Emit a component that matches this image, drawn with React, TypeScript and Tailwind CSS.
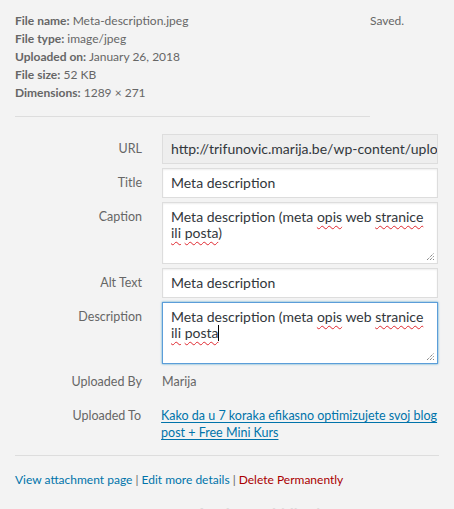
const details = [
  { label: "File name:", value: "Meta-description.jpeg" },
  { label: "File type:", value: "image/jpeg" },
  { label: "Uploaded on:", value: "January 26, 2018" },
  { label: "File size:", value: "52 KB" },
  { label: "Dimensions:", value: "1289 × 271" },
];

const squiggle =
  "underline decoration-wavy decoration-[#e0282f] decoration-1 underline-offset-[3px]";

function ResizeHandle() {
  return (
    <svg
      className="absolute right-[2px] bottom-[2px]"
      width="9"
      height="9"
      viewBox="0 0 9 9"
    >
      <path d="M1 8 L8 1 M4 8 L8 4 M7 8 L8 7" stroke="#555" strokeWidth="1" strokeDasharray="1 1" />
    </svg>
  );
}

function Row({ label, children }: { label: string; children: React.ReactNode }) {
  return (
    <div className="flex mb-[4px]">
      <div className="w-[127px] shrink-0 text-right text-[12.5px] text-[#666] pt-[6px] leading-[18px]">
        {label}
      </div>
      <div className="ml-[20px] w-[276px]">{children}</div>
    </div>
  );
}

function Caption({ focused, caret }: { focused?: boolean; caret?: boolean }) {
  return (
    <div
      className={
        "relative h-[62px] bg-white px-[8px] pt-[6px] text-[14px] leading-[16px] text-[#32373c] border " +
        (focused
          ? "border-[#5b9dd9] shadow-[0_0_2px_rgba(30,140,190,0.8)]"
          : "border-[#ddd] shadow-[inset_0_1px_2px_rgba(0,0,0,0.07)]")
      }
    >
      Meta description (meta <span className={squiggle}>opis</span> web{" "}
      <span className={squiggle}>stranice</span> <span className={squiggle}>ili</span>{" "}
      <span className={squiggle}>posta</span>
      {caret ? <span className="inline-block w-px h-[16px] bg-black align-[-3px]" /> : ")"}
      <ResizeHandle />
    </div>
  );
}

export default function App() {
  return (
    <div
      className="w-[454px] h-[509px] overflow-hidden bg-[#f3f3f3] text-[#666]"
      style={{ fontFamily: 'Lato, "Open Sans", sans-serif' }}
    >
      <div className="px-[15px] pt-[12px]">
        <div className="flex">
          <div className="w-[355px] text-[12px] leading-[18px]">
            {details.map((d) => (
              <div key={d.label}>
                <span className="font-bold">{d.label}</span> {d.value}
              </div>
            ))}
          </div>
          <div className="text-[12px] leading-[18px]">Saved.</div>
        </div>
        <div className="mt-[14px] w-[355px] border-t border-[#ddd]" />

        <div className="mt-[17px]">
          <Row label="URL">
            <div className="h-[30px] bg-[#eee] border border-[#ddd] px-[8px] text-[14px] leading-[28px] text-[#32373c] overflow-hidden whitespace-nowrap">
              http://trifunovic.marija.be/wp-content/uploads/2018/01/Meta-description.jpeg
            </div>
          </Row>
          <Row label="Title">
            <div className="h-[30px] bg-white border border-[#ddd] shadow-[inset_0_1px_2px_rgba(0,0,0,0.07)] px-[8px] text-[14px] leading-[28px] text-[#32373c]">
              Meta description
            </div>
          </Row>
          <Row label="Caption">
            <Caption />
          </Row>
          <Row label="Alt Text">
            <div className="h-[30px] bg-white border border-[#ddd] shadow-[inset_0_1px_2px_rgba(0,0,0,0.07)] px-[8px] text-[14px] leading-[28px] text-[#32373c]">
              Meta description
            </div>
          </Row>
          <Row label="Description">
            <Caption focused caret />
          </Row>

          <div className="flex mt-[10px] text-[12.5px] leading-[16px]">
            <div className="w-[127px] text-right">Uploaded By</div>
            <div className="ml-[20px]">Marija</div>
          </div>
          <div className="flex mt-[17px] text-[12.5px] leading-[17px]">
            <div className="w-[127px] text-right">Uploaded To</div>
            <a className="ml-[20px] w-[280px] text-[#0073aa] underline underline-offset-2">
              Kako da u 7 koraka efikasno optimizujete svoj blog post + Free Mini Kurs
            </a>
          </div>
        </div>

        <div className="mt-[14px] w-[424px] border-t border-[#ddd]" />
        <div className="mt-[16px] text-[12px] leading-[16px]">
          <a className="text-[#0073aa]">View attachment page</a> |{" "}
          <a className="text-[#0073aa]">Edit more details</a> |{" "}
          <a className="text-[#a00]">Delete Permanently</a>
        </div>
        <div className="mt-[14px] ml-[180px] text-[20px] leading-[24px] text-[#dcdcdc]">
          Activate Windows
        </div>
      </div>
    </div>
  );
}
